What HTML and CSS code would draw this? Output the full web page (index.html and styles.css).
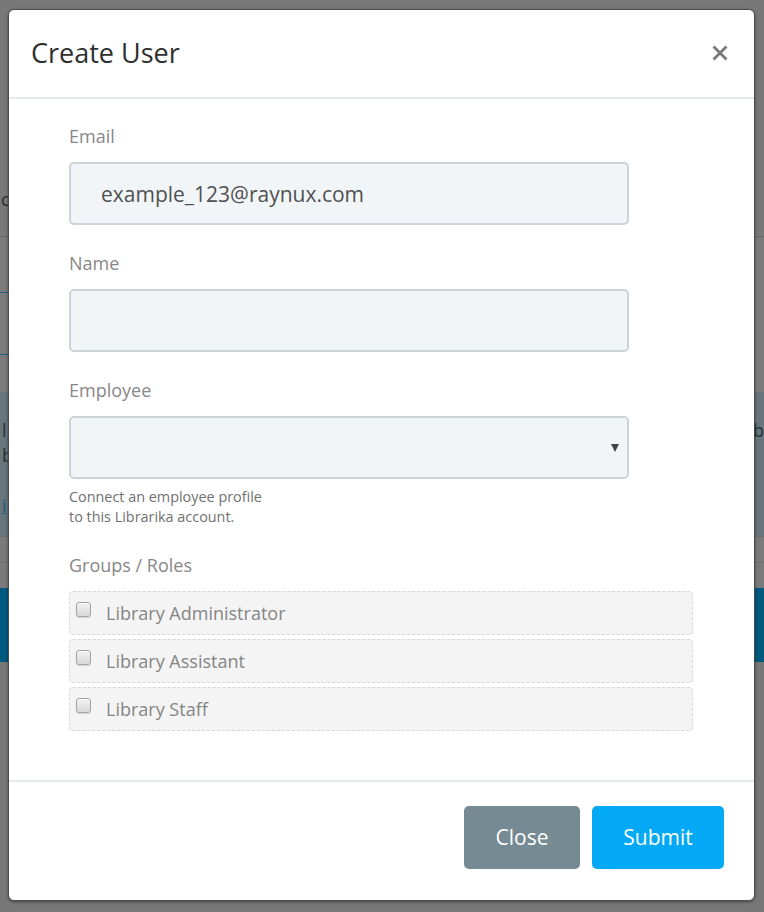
FILE: index.html
```html
<!DOCTYPE html>
<html lang="en">
<head>
<meta charset="utf-8">
<title>Create User</title>
<link rel="stylesheet" href="styles.css">
</head>
<body>
<div class="bg">
  <div class="bg-top"><span class="bg-word">c</span></div>
  <div class="bg-rule"></div>
  <div class="bg-gap1"></div>
  <div class="bg-tabrow"><div class="bg-tab"></div></div>
  <div class="bg-gap2"></div>
  <div class="bg-panel">
    <div class="bg-panel-left">
      <div class="bg-line">l</div>
      <div class="bg-line">b</div>
      <div class="bg-link">i</div>
    </div>
    <div class="bg-panel-right">
      <div class="bg-line">b</div>
    </div>
  </div>
  <div class="bg-gap3"></div>
  <div class="bg-gap4"></div>
  <div class="bg-bar"></div>
  <div class="bg-gap5"></div>
</div>

<div class="modal">
  <div class="modal-header">
    <h4 class="modal-title">Create User</h4>
    <button class="close" type="button" aria-label="Close">
      <svg width="16" height="16" viewBox="0 0 16 16"><path d="M1.5 1.5L14.5 14.5M14.5 1.5L1.5 14.5" stroke="#777777" stroke-width="2.8" fill="none"/></svg>
    </button>
  </div>
  <div class="modal-body">
    <div class="field">
      <label class="label">Email</label>
      <div class="control">example_123@raynux.com</div>
    </div>
    <div class="field">
      <label class="label">Name</label>
      <div class="control"></div>
    </div>
    <div class="field">
      <label class="label">Employee</label>
      <div class="control select"><span class="caret"></span></div>
      <div class="help">Connect an employee profile<br>to this Librarika account.</div>
    </div>
    <div class="groups">
      <label class="label">Groups / Roles</label>
      <label class="role"><input type="checkbox" class="cb"><span>Library Administrator</span></label>
      <label class="role"><input type="checkbox" class="cb"><span>Library Assistant</span></label>
      <label class="role"><input type="checkbox" class="cb"><span>Library Staff</span></label>
    </div>
  </div>
  <div class="modal-footer">
    <button class="btn btn-close" type="button">Close</button>
    <button class="btn btn-submit" type="button">Submit</button>
  </div>
</div>
</body>
</html>
```

FILE: styles.css
```css
html, body {
  margin: 0;
  padding: 0;
}

body {
  width: 764px;
  height: 912px;
  overflow: hidden;
  position: relative;
  font-family: "Open Sans", "DejaVu Sans", sans-serif;
  background: #777777;
}

/* ---------- dimmed page behind the dialog ---------- */
.bg {
  width: 764px;
  color: #2c2c2c;
  font-size: 18px;
}

.bg-top {
  height: 236px;
  box-sizing: border-box;
  padding-top: 186px;
  background: #787878;
  line-height: 26px;
}

.bg-word {
  display: inline-block;
  margin-left: 1px;
}

.bg-rule {
  height: 1px;
  background: #6a6a6a;
}

.bg-gap1 {
  height: 55px;
  background: #7b7b7b;
}

.bg-tabrow {
  height: 63px;
  background: #7b7b7b;
}

.bg-tab {
  width: 120px;
  height: 63px;
  box-sizing: border-box;
  border-top: 1px solid #20618b;
  border-bottom: 1px solid #20618b;
}

.bg-gap2 {
  height: 37px;
  background: #7b7b7b;
}

.bg-panel {
  height: 144px;
  box-sizing: border-box;
  padding-top: 26px;
  background: #66767b;
  display: flex;
  justify-content: space-between;
  color: #263033;
  line-height: 25px;
}

.bg-panel-left {
  margin-left: 2px;
}

.bg-panel-right {
  margin-right: 0;
}

.bg-link {
  margin-top: 25px;
  color: #1d5878;
  text-decoration: underline;
}

.bg-gap3 {
  height: 25px;
  border-top: 1px solid #6d6d6d;
  background: #7a7a7a;
}

.bg-gap4 {
  height: 25px;
  border-top: 1px solid #6d6d6d;
  background: #7a7a7a;
}

.bg-bar {
  height: 74px;
  background: #005a80;
}

.bg-gap5 {
  height: 250px;
  background: #777777;
}

/* ---------- modal ---------- */
.modal {
  position: absolute;
  left: 8px;
  top: 9px;
  width: 747px;
  box-sizing: border-box;
  background: #ffffff;
  border: 1px solid #4c4c4c;
  border-radius: 6px;
  box-shadow: 0 1px 3px rgba(0, 0, 0, 0.45);
}

.modal-header {
  display: flex;
  align-items: center;
  justify-content: space-between;
  padding: 25px 26px 26px 22px;
  border-bottom: 2px solid #e7eaed;
}

.modal-title {
  margin: 0;
  font-size: 27px;
  font-weight: 400;
  line-height: 36px;
  color: #2f2f2f;
}

.close {
  display: flex;
  padding: 0;
  margin: -1px 0 0 0;
  border: none;
  background: transparent;
  cursor: pointer;
}

.modal-body {
  padding: 24px 61px 49px 60px;
}

.field {
  margin-bottom: 25px;
}

.label {
  display: block;
  font-size: 18px;
  line-height: 26px;
  color: #878787;
  margin-bottom: 13px;
}

.control {
  width: 560px;
  height: 63px;
  box-sizing: border-box;
  border: 2px solid #cdd3d9;
  border-radius: 5px;
  background: #f2f5f8;
  padding: 0 30px;
  font-size: 21px;
  color: #505050;
  display: flex;
  align-items: center;
}

.select {
  justify-content: flex-end;
  padding-right: 8px;
}

.caret {
  width: 0;
  height: 0;
  border-left: 4.5px solid transparent;
  border-right: 4.5px solid transparent;
  border-top: 8px solid #444444;
}

.help {
  margin-top: 8px;
  font-size: 14.4px;
  line-height: 20px;
  color: #707070;
}

.role {
  display: flex;
  align-items: flex-start;
  height: 44px;
  box-sizing: border-box;
  border: 1px dashed #d8d8d8;
  border-radius: 4px;
  background: #f4f4f4;
  padding: 8px 6px 9px;
  margin-bottom: 4px;
  font-size: 18px;
  line-height: 26px;
  color: #858585;
}

.role:last-child {
  margin-bottom: 0;
}

.cb {
  -webkit-appearance: none;
  appearance: none;
  flex: none;
  width: 15px;
  height: 15px;
  margin: 2px 15px 0 0;
  box-sizing: border-box;
  border: 1px solid #a3a3a3;
  border-radius: 3px;
  background: linear-gradient(#f2f2f2, #d9d9d9);
  box-shadow: inset 0 1px 0 rgba(255, 255, 255, 0.7), 0 1px 1px rgba(0, 0, 0, 0.12);
}

.modal-footer {
  display: flex;
  justify-content: flex-end;
  gap: 12px;
  padding: 24px 30px 31px;
  border-top: 2px solid #e7eaed;
}

.btn {
  height: 63px;
  padding: 0 0 2px;
  border: none;
  border-radius: 5px;
  font-family: inherit;
  font-size: 21px;
  color: #ffffff;
  cursor: pointer;
}

.btn-close {
  width: 116px;
  background: #758a93;
}

.btn-submit {
  width: 132px;
  background: #03a9f4;
}
```
